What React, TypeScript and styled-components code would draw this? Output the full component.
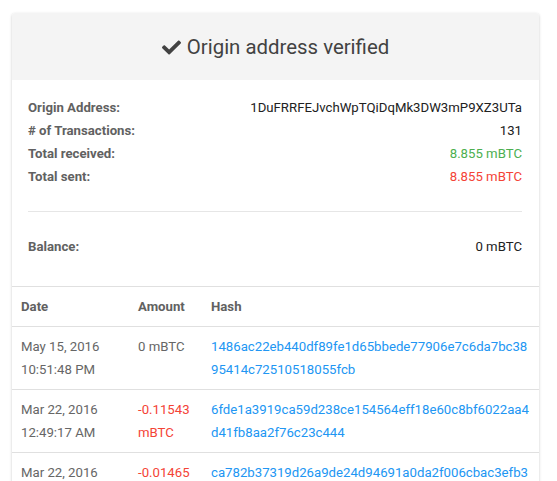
import React from "react";
import styled, { createGlobalStyle } from "styled-components";
import { FaCheck } from "react-icons/fa";

type Tx = {
  date: string;
  time: string;
  amount: string;
  negative: boolean;
  hash: string;
};

const transactions: Tx[] = [
  {
    date: "May 15, 2016",
    time: "10:51:48 PM",
    amount: "0 mBTC",
    negative: false,
    hash: "1486ac22eb440df89fe1d65bbede77906e7c6da7bc3895414c72510518055fcb",
  },
  {
    date: "Mar 22, 2016",
    time: "12:49:17 AM",
    amount: "-0.11543 mBTC",
    negative: true,
    hash: "6fde1a3919ca59d238ce154564eff18e60c8bf6022aa4d41fb8aa2f76c23c444",
  },
  {
    date: "Mar 22, 2016",
    time: "12:48:02 AM",
    amount: "-0.01465 mBTC",
    negative: true,
    hash: "ca782b37319d26a9de24d94691a0da2f006cbac3efb3b1e2a46f07c4d1e0a9c3",
  },
];

const GlobalStyle = createGlobalStyle`
  body {
    margin: 0;
    background: #fff;
    font-family: Roboto, "Liberation Sans", sans-serif;
    color: #212121;
  }
`;

const Page = styled.div`
  padding: 13px 18px 0 12px;
`;

const Card = styled.div`
  background: #fff;
  border-radius: 3px;
  box-shadow: 0 1px 3px rgba(0, 0, 0, 0.22);
  overflow: hidden;
`;

const Header = styled.div`
  background: #f4f4f4;
  height: 67px;
  display: flex;
  align-items: center;
  justify-content: center;
  gap: 6px;
  font-size: 20.4px;
  color: #424242;
  svg {
    width: 19px;
    height: 19px;
    margin-top: 1px;
  }
`;

const Details = styled.div`
  padding: 16px 17px 28px 16px;
`;

const InfoRow = styled.div`
  display: flex;
  justify-content: space-between;
  font-size: 13.2px;
  line-height: 23px;
`;

const InfoLabel = styled.span`
  font-weight: 700;
  color: #616161;
`;

const InfoValue = styled.span<{ $tone?: "up" | "down" }>`
  color: ${(p) =>
    p.$tone === "up" ? "#4caf50" : p.$tone === "down" ? "#f44336" : "#212121"};
`;

const Divider = styled.hr`
  border: 0;
  border-top: 1px solid #e6e6e6;
  margin: 23px 0;
`;

const Table = styled.table`
  width: 100%;
  border-collapse: collapse;
  table-layout: fixed;
  font-size: 13.2px;
  line-height: 23px;
  border-top: 1px solid #e0e0e0;
`;

const Th = styled.th<{ $w?: number }>`
  box-sizing: border-box;
  width: ${(p) => (p.$w ? `${p.$w}px` : "auto")};
  text-align: left;
  font-weight: 700;
  color: #616161;
  padding: 8px;
  border-bottom: 1px solid #e0e0e0;
  &:first-child {
    padding-left: 9px;
  }
`;

const Td = styled.td`
  vertical-align: top;
  padding: 8px;
  color: #666;
  border-bottom: 1px solid #e0e0e0;
  &:first-child {
    padding-left: 9px;
  }
`;

const Amount = styled.span<{ $negative: boolean }>`
  color: ${(p) => (p.$negative ? "#f44336" : "#666")};
`;

const HashLink = styled.a`
  color: #2196f3;
  text-decoration: none;
  word-break: break-all;
`;

export default function App() {
  return (
    <Page>
      <GlobalStyle />
      <Card>
        <Header>
          <FaCheck />
          <span>Origin address verified</span>
        </Header>
        <Details>
          <InfoRow>
            <InfoLabel>Origin Address:</InfoLabel>
            <InfoValue>1DuFRRFEJvchWpTQiDqMk3DW3mP9XZ3UTa</InfoValue>
          </InfoRow>
          <InfoRow>
            <InfoLabel># of Transactions:</InfoLabel>
            <InfoValue>131</InfoValue>
          </InfoRow>
          <InfoRow>
            <InfoLabel>Total received:</InfoLabel>
            <InfoValue $tone="up">8.855 mBTC</InfoValue>
          </InfoRow>
          <InfoRow>
            <InfoLabel>Total sent:</InfoLabel>
            <InfoValue $tone="down">8.855 mBTC</InfoValue>
          </InfoRow>
          <Divider />
          <InfoRow>
            <InfoLabel>Balance:</InfoLabel>
            <InfoValue>0 mBTC</InfoValue>
          </InfoRow>
        </Details>
        <Table>
          <thead>
            <tr>
              <Th $w={118}>Date</Th>
              <Th $w={73}>Amount</Th>
              <Th>Hash</Th>
            </tr>
          </thead>
          <tbody>
            {transactions.map((tx) => (
              <tr key={tx.hash}>
                <Td>
                  {tx.date}
                  <br />
                  {tx.time}
                </Td>
                <Td>
                  <Amount $negative={tx.negative}>{tx.amount}</Amount>
                </Td>
                <Td>
                  <HashLink href="#">{tx.hash}</HashLink>
                </Td>
              </tr>
            ))}
          </tbody>
        </Table>
      </Card>
    </Page>
  );
}
